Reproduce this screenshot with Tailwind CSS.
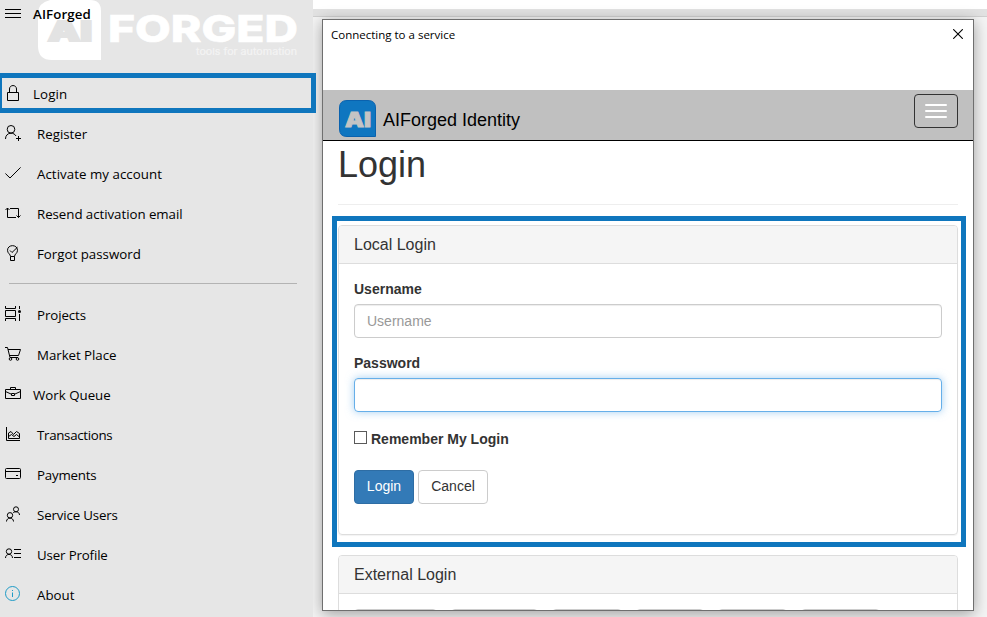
<!DOCTYPE html>
<html lang="en">
<head>
<meta charset="utf-8">
<title>AIForged</title>
<script src="https://cdn.jsdelivr.net/npm/@tailwindcss/browser@4"></script>
</head>
<body class="relative flex h-[617px] w-[987px] overflow-hidden bg-[#f4f4f4] text-black">

<!-- Sidebar -->
<aside class="relative z-10 h-[617px] w-[313px] shrink-0 bg-[#e6e6e6] font-['Open_Sans','Noto_Sans',sans-serif] text-[13.3px]">
  <header class="relative h-[74px]">
    <svg class="absolute left-0 top-0" width="313" height="66" viewBox="0 0 313 66">
      <path d="M50 0H90Q101 0 101 11V60H52Q38 60 38 46V13Q38 3 50 0Z" fill="#fff"/>
      <text x="48" y="41" textLength="44" lengthAdjust="spacingAndGlyphs" font-family="Inter, sans-serif" font-weight="900" font-size="27" fill="#e3e3e3" stroke="#e3e3e3" stroke-width="2">AI</text>
      <text x="108" y="42" textLength="190" lengthAdjust="spacingAndGlyphs" font-family="Inter, sans-serif" font-weight="800" font-size="37" fill="#fff" stroke="#fff" stroke-width=".6">FORGED</text>
      <text x="196" y="55" textLength="101" lengthAdjust="spacingAndGlyphs" font-family="Inter, sans-serif" font-size="9.500" fill="#f4f4f4" stroke="#f4f4f4" stroke-width=".2">tools for automation</text>
    </svg>
    <div class="relative flex h-[28px] items-center pl-[5px]">
      <svg width="16" height="16" viewBox="0 0 16 16" fill="none" stroke="#000"><path d="M0 3.500H16M0 7.500H16M0 11.500H16"/></svg>
      <span class="ml-[12px] pt-[2px] text-[13.3px] font-semibold tracking-[0.1px]">AIForged</span>
    </div>
  </header>

  <nav>
    <a class="flex h-10 items-center pl-[5px]">
      <svg width="16" height="16" viewBox="0 0 16 16" fill="none" stroke="#000" class="-mt-[2px]"><path d="M2.500 7.500H13.500V15.500H2.500ZM4.500 7.500V4C4.500 -.6 11.500 -.6 11.500 4V7.500"/></svg>
      <span class="ml-[12px] pt-[2px] tracking-[0.1px]">Login</span>
    </a>
    <a class="flex h-10 items-center pl-[5px]">
      <svg width="16" height="16" viewBox="0 0 16 16" fill="none" stroke="#000" class="-mt-[2px]"><circle cx="6" cy="4.300" r="3.800"/><path d="M.5 14C.5 10.500 2.700 8.200 6 8.200C8.300 8.200 10 9.200 11 11M13.500 11V16M11 13.500H16"/></svg>
      <span class="ml-[16px] pt-[2px]">Register</span>
    </a>
    <a class="flex h-10 items-center pl-[5px]">
      <svg width="16" height="16" viewBox="0 0 16 16" fill="none" stroke="#000" class="-mt-[2px]"><path d="M.4 8.500L5 13L15.600 2.400"/></svg>
      <span class="ml-[16px] pt-[2px] tracking-[0.04px]">Activate my account</span>
    </a>
    <a class="flex h-10 items-center pl-[5px]">
      <svg width="16" height="16" viewBox="0 0 16 16" fill="none" stroke="#000" class="-mt-[2px]"><path d="M11 12.500H2.500V3M.5 5L2.500 3L4.500 5M5 3.500H13.500V12.500M11.500 10.500L13.500 12.500L15.500 10.500"/></svg>
      <span class="ml-[16px] pt-[2px] tracking-[-0.05px]">Resend activation email</span>
    </a>
    <a class="flex h-10 items-center pl-[5px]">
      <svg width="16" height="16" viewBox="0 0 16 16" fill="none" stroke="#000" class="-mt-[2px]"><path d="M5.500 11.500C5.500 9 2.500 8.500 2.500 5.300C2.500 -.9 12.500 -.9 12.500 5.300C12.500 8.500 9.500 9 9.500 11.500ZM5.500 11.500V15.500H9.500V11.500M5 5.500L7 7.500L12.500 2.200"/></svg>
      <span class="ml-[16px] pt-[2px]">Forgot password</span>
    </a>
    <div class="h-[21px] pl-[9px] pt-[9px]"><div class="h-px w-[288px] bg-[#b3b3b3]"></div></div>
    <a class="flex h-10 items-center pl-[5px]">
      <svg width="16" height="16" viewBox="0 0 16 16" fill="none" stroke="#000" class="-mt-[4px]"><path d="M.5 1V3.500H10.500V1M.5 5.500H10.500V11.500H.5ZM.5 16V13.500H10.500V16M14.500 1V4M14.500 9V16"/><circle cx="14.500" cy="6.500" r="1.500" fill="#000" stroke="none"/></svg>
      <span class="ml-[16px] pt-[2px] tracking-[-0.1px]">Projects</span>
    </a>
    <a class="flex h-10 items-center pl-[5px]">
      <svg width="16" height="16" viewBox="0 0 16 16" fill="none" stroke="#000" class="-mt-[4px]"><path d="M0 2.500H2.500L5 12.500H13M3 4.500H15.500L13.500 10.500H4.500"/><circle cx="5.500" cy="14" r="1.300"/><circle cx="12.500" cy="14" r="1.300"/></svg>
      <span class="ml-[16px] pt-[2px] tracking-[-0.05px]">Market Place</span>
    </a>
    <a class="flex h-10 items-center pl-[5px]">
      <svg width="16" height="16" viewBox="0 0 16 16" fill="none" stroke="#000" class="-mt-[4px]"><path d="M.5 4.500H15.500V13.500H.5ZM5.500 4.500V2.500H10.500V4.500M.5 6.500L6 9M15.500 6.500L10 9M6.500 8.500H9.500V10.500H6.500Z"/></svg>
      <span class="ml-[12px] pt-[2px]">Work Queue</span>
    </a>
    <a class="flex h-10 items-center pl-[5px]">
      <svg width="16" height="16" viewBox="0 0 16 16" fill="none" stroke="#000" class="-mt-[2px]"><path d="M1.500 1V14.500H15M3.500 12.500V7L6 5.500L8.500 8.500L11.500 5.500L14.500 7.500V12.500ZM3.500 10.500L6.500 8.500L9 10.500L11.500 8.500L14.500 11"/></svg>
      <span class="ml-[16px] pt-[2px] tracking-[-0.3px]">Transactions</span>
    </a>
    <a class="flex h-10 items-center pl-[5px]">
      <svg width="16" height="16" viewBox="0 0 16 16" fill="none" stroke="#000" class="-mt-[2px]"><rect x=".5" y="2.500" width="15" height="10" rx="1"/><path d="M.5 5.500H15.500M11 9.500H13"/></svg>
      <span class="ml-[16px] pt-[2px] tracking-[-0.2px]">Payments</span>
    </a>
    <a class="flex h-10 items-center pl-[5px]">
      <svg width="16" height="16" viewBox="0 0 16 16" fill="none" stroke="#000" class="-mt-[2px]"><circle cx="11" cy="3.300" r="2.500"/><circle cx="5" cy="9.300" r="2.700"/><path d="M1.500 15.500C1.500 11 8.500 11 8.500 15.500M8 7C9 5.300 14.500 5 14.500 9"/></svg>
      <span class="ml-[16px] pt-[2px] tracking-[-0.15px]">Service Users</span>
    </a>
    <a class="flex h-10 items-center pl-[5px]">
      <svg width="16" height="16" viewBox="0 0 16 16" fill="none" stroke="#000" class="-mt-[2px]"><circle cx="4" cy="5.500" r="2.700"/><path d="M.5 12C.5 7.200 7.500 7.200 7.500 12M9 3.500H16M9 7.500H16M9 11.500H16"/></svg>
      <span class="ml-[16px] pt-[2px] tracking-[-0.15px]">User Profile</span>
    </a>
    <a class="flex h-10 items-center pl-[5px]">
      <svg width="16" height="16" viewBox="0 0 16 16" fill="none" stroke="#1e9bc6" class="-mt-[2px]"><circle cx="7.500" cy="7.500" r="7"/><path d="M7.500 6.500V11M7.500 4V5"/></svg>
      <span class="ml-[16px] pt-[2px]">About</span>
    </a>
  </nav>
  <div class="absolute left-0 top-[73px] h-[40px] w-[316px] border-5 border-l-2 border-[#0f76bd]"></div>
</aside>

<!-- Page behind the dialog -->
<main class="relative h-[617px] flex-1">
  <div class="h-[9px] bg-white"></div>
  <div class="h-[8px] border-b border-[#d0d0d0] bg-[#e2e2e2]"></div>

  <!-- Dialog window -->
  <section class="absolute left-[9px] top-[19px] h-[592px] w-[652px] overflow-hidden border border-[#6f6f6f] bg-white font-['Liberation_Sans',Arial,sans-serif] text-[14px] leading-[20px] text-[#333] shadow-[0_3px_14px_rgba(0,0,0,0.35)]">
    <div class="flex h-[70px] items-start justify-between pl-[8px] pr-[10px] font-['Open_Sans','Noto_Sans',sans-serif] text-[11.5px] text-black">
      <span class="pt-[5px]">Connecting to a service</span>
      <svg class="mt-[9px]" width="10" height="10" viewBox="0 0 10 10" stroke="#000" stroke-width="1.100"><path d="M.2 .2L9.800 9.800M9.800 .2L.2 9.800"/></svg>
    </div>

    <div class="flex h-[51px] items-start justify-between border-b border-black bg-[#c0c0c0] pl-[16px] pr-[15px]">
      <div class="flex pt-[10px]">
        <svg width="37" height="37" viewBox="0 0 37 37">
          <path d="M8 .5H29Q36.500 .5 36.500 8V36.500H8Q.5 36.500 .5 29V8Q.5 .5 8 .5Z" fill="#0f76c0" stroke="#0a62ae"/>
          <text x="6" y="26.500" textLength="26" lengthAdjust="spacingAndGlyphs" font-family="Inter, sans-serif" font-weight="900" font-size="20.500" fill="#c4c4c4" stroke="#c4c4c4" stroke-width=".9">AI</text>
        </svg>
        <span class="ml-[7px] mt-[10px] text-[18px] text-black">AIForged Identity</span>
      </div>
      <div class="mt-[4px] flex h-[34px] w-[44px] flex-col items-center gap-[4px] rounded-[4px] border border-[#333] pt-[9px]">
        <i class="h-[2px] w-[22px] rounded-[1px] bg-white"></i>
        <i class="h-[2px] w-[22px] rounded-[1px] bg-white"></i>
        <i class="h-[2px] w-[22px] rounded-[1px] bg-white"></i>
      </div>
    </div>

    <div class="px-[15px]">
      <h1 class="h-[64px] border-b border-[#eee] pt-[4px] text-[36px] leading-[40px]">Login</h1>

      <div class="mt-[20px] h-[310px] rounded-[4px] border border-[#ddd] shadow-[0_1px_1px_rgba(0,0,0,0.05)]">
        <h3 class="h-[38px] rounded-t-[3px] border-b border-[#ddd] bg-[#f5f5f5] px-[15px] pt-[9px] text-[16px] leading-[20px]">Local Login</h3>
        <div class="px-[15px] pt-[15px]">
          <div class="mb-[5px] font-bold">Username</div>
          <div class="flex h-[34px] items-center rounded-[4px] border border-[#ccc] px-[12px] text-[#999] shadow-[inset_0_1px_1px_rgba(0,0,0,0.075)]">Username</div>
          <div class="mb-[5px] mt-[15px] font-bold">Password</div>
          <div class="h-[34px] rounded-[4px] border border-[#66afe9] shadow-[inset_0_1px_1px_rgba(0,0,0,0.075),0_0_8px_rgba(102,175,233,0.6)]"></div>
          <div class="mt-[17px] flex">
            <i class="mt-[2px] h-[13px] w-[13px] border border-[#5a5a5a] bg-white"></i>
            <span class="ml-[4px] font-bold">Remember My Login</span>
          </div>
          <div class="mt-[21px] flex gap-[4px]">
            <div class="h-[34px] w-[60px] rounded-[4px] border border-[#2e6da4] bg-[#337ab7] pt-[5px] text-center text-white">Login</div>
            <div class="h-[34px] w-[70px] rounded-[4px] border border-[#ccc] bg-white pt-[5px] text-center">Cancel</div>
          </div>
        </div>
      </div>

      <div class="mt-[20px] h-[100px] rounded-[4px] border border-[#ddd]">
        <h3 class="h-[38px] rounded-t-[3px] border-b border-[#ddd] bg-[#f5f5f5] px-[15px] pt-[9px] text-[16px] leading-[20px]">External Login</h3>
        <div class="flex gap-[14px] px-[15px] pt-[15px]">
          <div class="h-[34px] w-[83px] rounded-[4px] border border-[#ccc]"></div>
          <div class="h-[34px] w-[87px] rounded-[4px] border border-[#ccc]"></div>
          <div class="h-[34px] w-[70px] rounded-[4px] border border-[#ccc]"></div>
          <div class="h-[34px] w-[68px] rounded-[4px] border border-[#ccc]"></div>
          <div class="h-[34px] w-[69px] rounded-[4px] border border-[#ccc]"></div>
          <div class="h-[34px] w-[79px] rounded-[4px] border border-[#ccc]"></div>
        </div>
      </div>
    </div>
    <div class="absolute left-[9px] top-[196px] h-[331px] w-[634px] border-5 border-[#0f76bd]"></div>
  </section>
</main>
</body>
</html>
